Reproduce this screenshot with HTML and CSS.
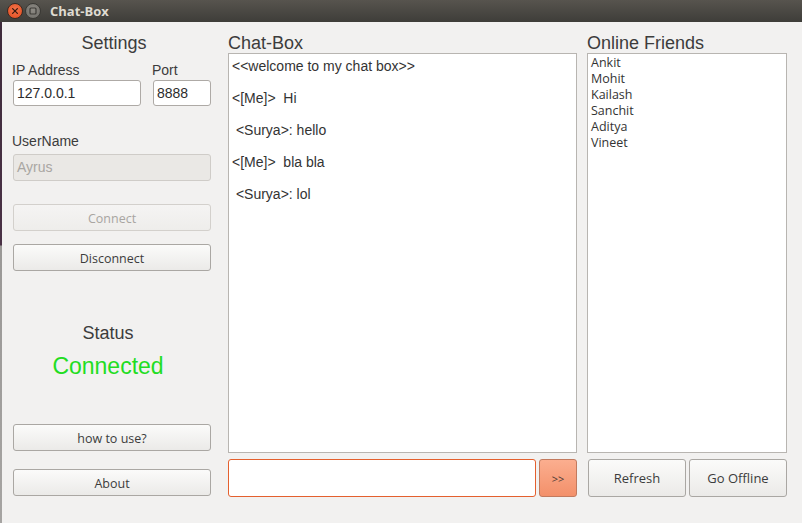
FILE: index.html
```html
<!DOCTYPE html>
<html>
<head>
<meta charset="utf-8">
<link rel="stylesheet" href="styles.css">
</head>
<body>
<div class="screen">
  <div class="strip"></div>
  <div class="window">
    <div class="titlebar">
      <span class="wbtn close">
        <svg width="14" height="14" viewBox="0 0 14 14"><path d="M4.6 4.6 L9.4 9.4 M9.4 4.6 L4.6 9.4" stroke="#3a1a10" stroke-width="1.3" stroke-linecap="round"/></svg>
      </span>
      <span class="wbtn mini">
        <svg width="14" height="14" viewBox="0 0 14 14"><rect x="4" y="4" width="6" height="6" rx="1" fill="none" stroke="#3c3b37" stroke-width="1.2"/></svg>
      </span>
      <span class="wtitle">Chat-Box</span>
    </div>
    <div class="content">
      <div class="col-left">
        <div class="heading center settings">Settings</div>
        <div class="row-ip">
          <div class="field ip">
            <div class="label">IP Address</div>
            <div class="input">127.0.0.1</div>
          </div>
          <div class="field port">
            <div class="label">Port</div>
            <div class="input">8888</div>
          </div>
        </div>
        <div class="label user-label">UserName</div>
        <div class="input disabled">Ayrus</div>
        <div class="btn disabled-btn connect">Connect</div>
        <div class="btn disconnect">Disconnect</div>
        <div class="heading center status">Status</div>
        <div class="connected">Connected</div>
        <div class="btn howto">how to use?</div>
        <div class="btn about">About</div>
      </div>
      <div class="col-mid">
        <div class="heading">Chat-Box</div>
        <div class="chat">
          <div class="line">&lt;&lt;welcome to my chat box&gt;&gt;</div>
          <div class="line">&nbsp;</div>
          <div class="line">&lt;[Me]&gt;&nbsp; Hi</div>
          <div class="line">&nbsp;</div>
          <div class="line">&nbsp;&lt;Surya&gt;: hello</div>
          <div class="line">&nbsp;</div>
          <div class="line">&lt;[Me]&gt;&nbsp; bla bla</div>
          <div class="line">&nbsp;</div>
          <div class="line">&nbsp;&lt;Surya&gt;: lol</div>
        </div>
        <div class="send-row">
          <div class="msg-input"></div>
          <div class="send-btn">&gt;&gt;</div>
        </div>
      </div>
      <div class="col-right">
        <div class="heading">Online Friends</div>
        <div class="friends">
          <div class="friend">Ankit</div>
          <div class="friend">Mohit</div>
          <div class="friend">Kailash</div>
          <div class="friend">Sanchit</div>
          <div class="friend">Aditya</div>
          <div class="friend">Vineet</div>
        </div>
        <div class="btn-row">
          <div class="btn big">Refresh</div>
          <div class="btn big">Go Offline</div>
        </div>
      </div>
    </div>
  </div>
</div>
</body>
</html>
```
FILE: styles.css
```css
* { box-sizing: border-box; }
html, body { margin: 0; padding: 0; }
body {
  width: 802px;
  height: 523px;
  overflow: hidden;
  background: #f2f1f0;
  font-family: "Liberation Sans", Arial, sans-serif;
  color: #3c3c3c;
}
.screen {
  display: flex;
  width: 802px;
  height: 523px;
}
.strip {
  width: 2px;
  background: linear-gradient(#3d2a3a 0, #4a3246 245px, #9a9896 246px, #a6a4a2 523px);
}
.window {
  flex: 1;
  display: flex;
  flex-direction: column;
  background: #f2f1f0;
}
.titlebar {
  height: 22px;
  background: linear-gradient(#57544e, #3e3d39);
  display: flex;
  align-items: center;
  margin-left: -2px;
  padding-left: 7px;
}
.wbtn {
  width: 16px;
  height: 16px;
  border-radius: 50%;
  display: flex;
  align-items: center;
  justify-content: center;
  margin-right: 2px;
}
.close {
  background: radial-gradient(circle at 50% 40%, #f5754b, #df4a1e);
  border: 1px solid #3a2a22;
}
.mini {
  background: radial-gradient(circle at 50% 40%, #8e8b85, #6d6b66);
  border: 1px solid #3a3935;
}
.wtitle {
  margin-left: 7px;
  color: #dfdbd2;
  font-family: "Open Sans", "Noto Sans", sans-serif;
  font-weight: bold;
  font-size: 13px;
}
.content {
  display: flex;
  padding: 11px 0 0 11px;
}
.col-left {
  width: 198px;
  display: flex;
  flex-direction: column;
}
.col-mid {
  width: 349px;
  margin-left: 17px;
  display: flex;
  flex-direction: column;
}
.col-right {
  width: 200px;
  margin-left: 10px;
  display: flex;
  flex-direction: column;
}
.heading {
  font-size: 18px;
  line-height: 20px;
  height: 20px;
  color: #3c3c3c;
}
.center { text-align: center; }
.settings { padding-left: 4px; }
.row-ip {
  display: flex;
  margin-top: 9px;
}
.field.ip { width: 128px; }
.field.port { width: 58px; margin-left: 12px; }
.label {
  font-size: 14px;
  line-height: 17px;
  height: 17px;
  margin-left: -1px;
}
.input {
  margin-top: 1px;
  height: 26px;
  border: 1px solid #aeaaa6;
  border-radius: 3px;
  background: #ffffff;
  font-size: 14px;
  line-height: 24px;
  padding-left: 3px;
  color: #2c2c2c;
}
.user-label { margin-top: 27px; }
.input.disabled {
  margin-top: 4px;
  height: 27px;
  line-height: 25px;
  background: #eae8e5;
  border-color: #cfccc8;
  color: #a9a6a2;
}
.btn {
  height: 27px;
  border: 1px solid #aaa7a3;
  border-radius: 3px;
  background: linear-gradient(#fbfbfa, #ebeae8);
  font-family: "Open Sans", "Noto Sans", sans-serif;
  font-size: 12.5px;
  color: #3c3c3c;
  display: flex;
  align-items: center;
  justify-content: center;
  padding-top: 1px;
}
.connect { margin-top: 23px; }
.disabled-btn {
  color: #a8a5a1;
  border-color: #d3d0cc;
  background: linear-gradient(#f5f4f3, #eeedeb);
}
.disconnect { margin-top: 13px; }
.status { margin-top: 51px; line-height: 22px; height: 22px; padding-right: 8px; }
.connected {
  margin-top: 8px;
  font-size: 23px;
  line-height: 28px;
  text-align: center;
  color: #22dd22;
  padding-right: 8px;
}
.howto { margin-top: 44px; }
.about { margin-top: 18px; }
.chat {
  height: 400px;
  border: 1px solid #b8b5b1;
  background: #ffffff;
  padding: 4px 0 0 3px;
  font-size: 14px;
  line-height: 16px;
  color: #333333;
}
.line { height: 16px; white-space: pre; }
.send-row {
  display: flex;
  margin-top: 6px;
  height: 38px;
}
.msg-input {
  width: 308px;
  border: 1px solid #e4602e;
  border-radius: 3px;
  background: #ffffff;
}
.send-btn {
  width: 38px;
  margin-left: 3px;
  border: 1px solid #c27a5e;
  border-radius: 3px;
  background: linear-gradient(#fbae8f, #f3906a);
  font-family: "Open Sans", "Noto Sans", sans-serif;
  font-size: 11px;
  color: #4a3a34;
  display: flex;
  align-items: center;
  justify-content: center;
}
.friends {
  height: 400px;
  border: 1px solid #b8b5b1;
  background: #ffffff;
  padding: 1px 0 0 3px;
}
.friend {
  font-family: "Open Sans", "Noto Sans", sans-serif;
  font-size: 12.5px;
  line-height: 16px;
  height: 16px;
  color: #333333;
}
.btn-row {
  display: flex;
  margin-top: 6px;
  gap: 3px;
  padding-left: 1px;
}
.btn.big {
  height: 38px;
  width: 98px;
  font-size: 13px;
  padding-top: 0;
}
```
